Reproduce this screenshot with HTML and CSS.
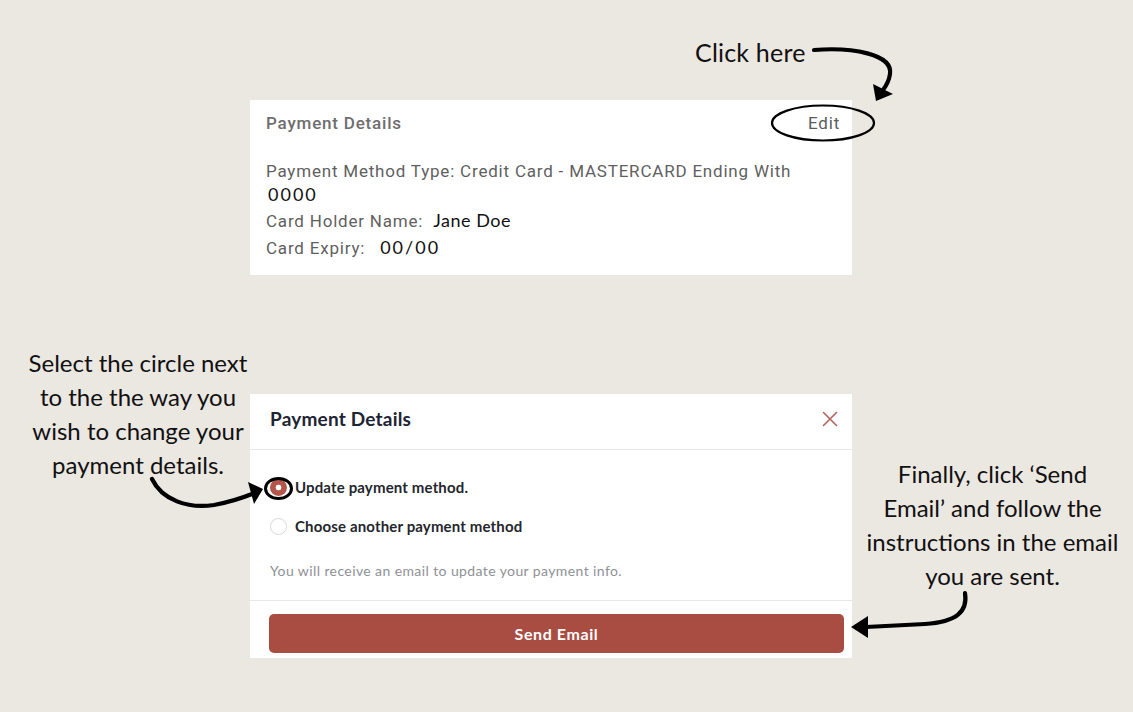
FILE: index.html
```html
<!DOCTYPE html>
<html lang="en">
<head>
<meta charset="utf-8">
<title>Payment Details guide</title>
<link rel="stylesheet" href="styles.css">
</head>
<body>
<div class="canvas">
  <div class="note note-click">Click here</div>

  <section class="card summary">
    <div class="summary-head">
      <h2 class="summary-title">Payment Details</h2>
      <span class="edit-link">Edit</span>
    </div>
    <p class="line method"><span class="lbl">Payment Method Type: Credit Card - MASTERCARD Ending With</span> <span class="val val-num">0000</span></p>
    <p class="line"><span class="lbl">Card Holder Name:</span><span class="val val-name">Jane Doe</span></p>
    <p class="line"><span class="lbl">Card Expiry:</span><span class="val val-exp">00/00</span></p>
  </section>

  <div class="row">
    <div class="note note-select">Select the circle next<br>to the the way you<br>wish to change your<br>payment details.</div>

    <section class="card modal">
      <header class="modal-head">
        <h2 class="modal-title">Payment Details</h2>
        <svg class="close" width="16" height="16" viewBox="0 0 16 16" aria-hidden="true"><path d="M1.5 1.5 L14.5 14.5 M14.5 1.5 L1.5 14.5" stroke="#b8625a" stroke-width="1.6" fill="none" stroke-linecap="round"/></svg>
      </header>
      <div class="modal-body">
        <label class="option"><span class="radio checked"></span><span>Update payment method.</span></label>
        <label class="option"><span class="radio"></span><span>Choose another payment method</span></label>
        <p class="hint">You will receive an email to update your payment info.</p>
      </div>
      <footer class="modal-foot">
        <button class="send">Send Email</button>
      </footer>
    </section>

    <div class="note note-final">Finally, click ‘Send<br>Email’ and follow the<br>instructions in the email<br>you are sent.</div>
  </div>

  <svg class="overlay" width="1133" height="712" viewBox="0 0 1133 712" aria-hidden="true">
    <g fill="none" stroke="#000" stroke-linecap="round">
      <ellipse cx="823" cy="123" rx="51" ry="17.5" stroke-width="2.2"/>
      <ellipse cx="278.5" cy="488.5" rx="13" ry="10" stroke-width="3"/>
      <path d="M814 50 C 852 47, 893 54, 890 74 C 889 81, 886 86, 883 90" stroke-width="4.2"/>
      <path d="M152 479 C 162 500, 188 509, 214 505 C 230 502, 242 498, 252 494" stroke-width="4.2"/>
      <path d="M965 593 C 968 612, 956 622, 925 624 L 866 627" stroke-width="4.2"/>
    </g>
    <g fill="#000">
      <polygon points="876,101 873,84 893,94"/>
      <polygon points="263,489 248,482 254,504"/>
      <polygon points="851,627 868,616 868,638"/>
    </g>
  </svg>
</div>
</body>
</html>
```

FILE: styles.css
```css
* { box-sizing: border-box; }

html, body {
  margin: 0;
  padding: 0;
  background: #ebe7e1;
}

.canvas {
  position: relative;
  width: 1133px;
  height: 712px;
  padding-top: 37px;
  overflow: hidden;
  font-family: Lato, "Noto Sans", sans-serif;
  color: #111;
}

.note {
  font-family: Lato, "Noto Sans", sans-serif;
  font-size: 24px;
  line-height: 34px;
  color: #111;
  white-space: nowrap;
}

.note-click {
  padding-left: 695px;
  height: 30px;
  line-height: 30px;
  font-size: 25px;
  letter-spacing: 0.2px;
}

.card {
  background: #fff;
  width: 602px;
}

/* Summary card */
.summary {
  margin: 33px 0 0 250px;
  padding: 12px 12px 12px 16px;
  font-family: Roboto, "Liberation Sans", sans-serif;
}

.summary-head {
  display: flex;
  justify-content: space-between;
  align-items: center;
  height: 22px;
  margin-bottom: 26px;
}

.summary-title {
  margin: 0;
  font-size: 17px;
  letter-spacing: 0.8px;
  font-weight: 500;
  color: #6e6e6e;
}

.edit-link {
  font-size: 17px;
  letter-spacing: 0.8px;
  color: #5b5b5b;
}

.line {
  margin: 0 0 3px 0;
  font-size: 17px;
  letter-spacing: 0.8px;
  line-height: 23px;
  color: #5f5f5f;
}

.method { width: 560px; }

.val {
  font-family: Lato, "Noto Sans", sans-serif;
  color: #111;
  font-size: 18px;
  letter-spacing: 0.5px;
}

.val-num { display: block; margin-left: 2px; letter-spacing: 2px; }
.val-name { margin-left: 10px; }
.val-exp { margin-left: 15px; letter-spacing: 2px; }

/* Lower row */
.row {
  display: grid;
  grid-template-columns: 250px 602px 281px;
  align-items: start;
  margin-top: 71px;
}

.note-select {
  padding-left: 26px;
  text-align: center;
  width: 250px;
}

.note-final {
  text-align: center;
  margin-top: 111px;
}

.modal {
  margin-top: 48px;
  font-family: Lato, "Noto Sans", sans-serif;
}

.modal-head {
  display: flex;
  justify-content: space-between;
  align-items: center;
  height: 56px;
  padding: 0 14px 6px 20px;
  border-bottom: 1px solid #e8e8e8;
}

.modal-title {
  margin: 0;
  font-size: 19px;
  letter-spacing: 0.2px;
  font-weight: 700;
  color: #1d2433;
}

.close { display: block; }

.modal-body {
  padding: 27px 20px 21px 20px;
  border-bottom: 1px solid #e8e8e8;
}

.option {
  display: flex;
  align-items: center;
  gap: 8px;
  height: 20px;
  margin-bottom: 19px;
  font-size: 15px;
  letter-spacing: 0.15px;
  font-weight: 700;
  color: #24262d;
}

.radio {
  width: 17px;
  height: 17px;
  border-radius: 50%;
  border: 1px solid #d6d7dc;
  background: #fff;
  flex: none;
}

.radio.checked {
  border: none;
  background: radial-gradient(circle, #fff 0 2.6px, #b5564b 3.2px);
}

.hint {
  margin: 26px 0 0 0;
  font-size: 14px;
  letter-spacing: 0.4px;
  color: #8e9196;
}

.modal-foot {
  padding: 13px 8px 5px 19px;
}

.send {
  display: block;
  width: 100%;
  height: 39px;
  border: none;
  border-radius: 5px;
  background: #a94c42;
  color: #fff;
  font-family: Lato, "Noto Sans", sans-serif;
  font-size: 16px;
  font-weight: 700;
  letter-spacing: 0.6px;
}

.overlay {
  position: absolute;
  left: 0;
  top: 0;
  pointer-events: none;
}
```
